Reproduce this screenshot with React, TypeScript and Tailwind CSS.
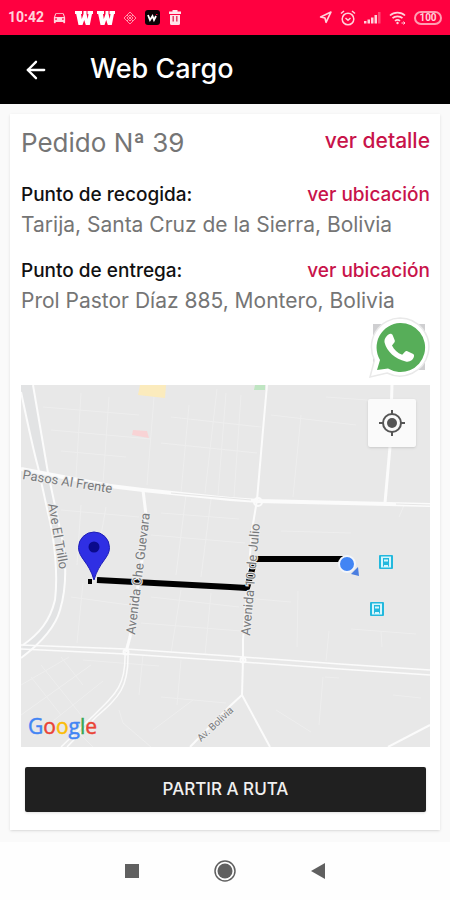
import { ArrowLeft, Navigation } from "lucide-react";
import { MdDirectionsCar } from "react-icons/md";

// =============================================================================
// DATA
// =============================================================================

interface Stop {
  id: string;
  label: string;
  address: string;
}

const STOPS: Stop[] = [
  {
    id: "pickup",
    label: "Punto de recogida:",
    address: "Tarija, Santa Cruz de la Sierra, Bolivia",
  },
  {
    id: "dropoff",
    label: "Punto de entrega:",
    address: "Prol Pastor Díaz 885, Montero, Bolivia",
  },
];

const MINOR_STREETS = [
  "M22 22 L118 30 M30 45 L130 54 M40 66 L105 72 M60 8 L55 92 M88 12 L82 98",
  "M133 12 L126 100 M168 20 L160 108 M196 4 L184 108 M150 32 L240 42 M140 58 L236 68",
  "M205 8 L197 110 M220 10 L213 112 M250 30 L335 40 M280 30 L272 112 M305 12 L360 16",
  "M60 120 L56 180 M85 122 L80 150 M40 125 L118 132 M50 212 L108 220 M62 198 L56 258",
  "M140 128 L218 134 M165 110 L155 190 M190 114 L180 192 M130 150 L224 158",
  "M130 212 L218 222 M160 205 L150 268 M190 208 L184 270 M120 238 L220 246",
  "M260 146 L330 148 M277 206 L276 262 M235 214 L270 217 M308 246 L305 276",
  "M330 244 L395 249 M360 246 L361 262 M384 118 L378 132 M304 292 L318 293 M302 292 L298 340",
  "M255 325 L290 347 M372 310 L400 313 M0 300 L48 272 M0 330 L70 280 M12 352 L82 296",
  "M20 280 L72 345 M40 272 L62 300 M98 325 L102 338 L130 362 M132 345 L172 315 M160 275 L156 320",
  "M62 275 L138 281 M122 270 L118 310 M140 312 L205 318 M50 340 L72 362 M10 292 L40 330",
];

// =============================================================================
// STATUS BAR
// =============================================================================

function HeavyW() {
  return (
    <svg width="18" height="16" viewBox="0 0 18 16" aria-hidden="true">
      <path
        d="M0 1h7v3H6l.8 5L8.500 4V1h3v3l1.200 5L13.500 4h-1V1H18v3h-1l-2.200 11h-4L9.200 10 7.500 15h-4L1.200 4H0z"
        fill="#fff"
      />
    </svg>
  );
}

function StatusBar() {
  return (
    <div className="flex h-[35px] items-center justify-between bg-[#ff0040] px-2 text-[#ffd3dc]">
      <div className="flex items-center gap-2">
        <span className="font-[Roboto] text-[14px] font-bold">10:42</span>
        <MdDirectionsCar size={15} aria-hidden="true" />
        <span className="flex gap-1">
          <HeavyW />
          <HeavyW />
        </span>
        <svg width="14" height="14" viewBox="0 0 14 14" fill="none" stroke="#ff91a8" aria-hidden="true">
          <path d="M7 1 13 7 7 13 1 7Z M7 4 10 7 7 10 4 7Z M4 4 10 10 M10 4 4 10" />
        </svg>
        <svg width="15" height="15" viewBox="0 0 15 15" aria-hidden="true">
          <rect width="15" height="15" rx="3" fill="#0b0306" />
          <path d="M3 5 5 10 7.500 6 9 10 11 6" fill="none" stroke="#fff" strokeWidth="1.800" />
          <path d="M11 4.500h1.500" stroke="#ff0040" />
        </svg>
        <svg width="14" height="15" viewBox="0 0 14 15" aria-hidden="true">
          <path d="M4.500 0h5v1.500H13V4H1V1.500h3.500zM2 5h10v8.500a1.500 1.500 0 0 1-1.500 1.500h-7A1.500 1.500 0 0 1 2 13.500z" fill="#ffe3e9" />
          <path d="M5.200 6v5.500M8.800 6v5.500" stroke="#e0305a" strokeWidth="1.400" />
        </svg>
      </div>
      <div className="flex items-center gap-2">
        <Navigation size={13} strokeWidth={3} aria-hidden="true" />
        <svg width="16" height="16" viewBox="0 0 16 16" fill="none" stroke="currentColor" strokeWidth="1.500" aria-hidden="true">
          <circle cx="8" cy="9" r="5.800" />
          <path d="M1 3.500 4 1M15 3.500 12 1M5.500 8 8 10.200 10.500 8" />
        </svg>
        <svg width="17" height="13" viewBox="0 0 17 13" fill="currentColor" aria-hidden="true">
          <path d="M0 10h2.500v2.500H0zM3.500 8.500H6v4H3.500zM7 6.500h2.500v6H7zM10.500 4H13v8.500h-2.500z" />
          <path d="M14 1h2.500v11.500H14z" opacity="0.35" />
        </svg>
        <svg width="17" height="14" viewBox="0 0 17 14" fill="none" stroke="currentColor" strokeWidth="1.700" aria-hidden="true">
          <path d="M1 4.500C5 .7 12 .7 16 4.500M3.500 7.200C6 4.800 11 4.800 13.500 7.200M6 10c1.500-1.400 3.500-1.400 5 0" />
          <circle cx="8.500" cy="12" r="1.200" fill="currentColor" stroke="none" />
          <path d="M12.500 12h3M14.500 10.500 16 12 14.500 13.500" strokeWidth="1" />
        </svg>
        <span className="flex h-3.5 w-7 items-center justify-center rounded-full border-2 border-[#ff9db1] font-[Roboto] text-[10px] leading-none font-bold">
          100
        </span>
      </div>
    </div>
  );
}

// =============================================================================
// ICONS
// =============================================================================

function WhatsAppIcon() {
  return (
    <svg width="62" height="63" viewBox="0 0 62 63" aria-hidden="true">
      <path d="M5 7h52v46H5z" fill="#cfcfd1" />
      <path
        d="M32 1a29 29 0 1 1-13 55L2 60 6.500 43A29 29 0 0 1 32 1z"
        fill="#fff"
        stroke="#e9e9e9"
        strokeWidth="1.500"
      />
      <path d="M32 6a24.500 24.500 0 1 1-12 45.500L9 53l3-10A24.500 24.500 0 0 1 32 6z" fill="#57ae59" />
      <path
        d="M20.500 17.500c1.500-1.200 3.500-1 4.200.8l2 5c.4 1-.1 2-.8 2.800l-1.900 2.400c2 4.200 5.500 7.500 10.200 9.300l2.800-3c.7-.8 1.500-.9 2.400-.5l5.300 2.500c1.200.6 1.500 1.300 1.300 2.500-.7 4.200-4.700 6-8.300 5.200-10.500-2.300-19-10.500-21-18.500-.8-3.500 1-6.500 3.800-8.500z"
        fill="#fff"
      />
    </svg>
  );
}

function BusStop({ x, y }: { x: number; y: number }) {
  return (
    <g transform={`translate(${x} ${y})`}>
      <rect width="14" height="14" rx="1" fill="#22b8dd" />
      <path d="M2 1.500h10v11H2z" fill="#d6f6fd" />
      <path d="M4 3h6v7H4z" fill="#22b8dd" />
      <path d="M5 4.500h4v2H5z" fill="#d6f6fd" />
      <path d="M4.500 10v1.500M9.500 10v1.500" stroke="#22b8dd" />
    </g>
  );
}

// =============================================================================
// MAP
// =============================================================================

function RouteMap() {
  return (
    <div className="relative">
      <svg
        viewBox="0 0 409 362"
        className="block h-auto w-full bg-[#e8e8e8] font-[Roboto]"
        role="img"
        aria-label="Mapa de la ruta"
      >
        {/* Landmarks */}
        <path d="M119 0h26l-1 13-27-3z" fill="#fbebbd" />
        <path d="M112 45l14 1 2 7-17-3z" fill="#f8d3d5" />
        <path d="M234 0h10v5h-11z" fill="#bfe5c2" />

        {/* Streets */}
        <g fill="none" stroke="#eeeeee">
          {MINOR_STREETS.map((d) => (
            <path key={d} d={d} />
          ))}
        </g>
        <path
          d="M0 7C6 35 11 60 17 82L27 128C34 155 37 190 34 215C29 236 18 249 2 260L0 273C20 258 34 243 39 225C45 205 46 185 42 158L27 88L12 0H0z"
          fill="#e2e3e4"
        />
        <g fill="none" stroke="#fbfbfb" strokeWidth="2">
          <path d="M0 7C6 35 11 60 17 82L27 128C34 155 37 190 34 215C29 236 18 249 2 260" />
          <path d="M12 0 27 88 42 158C46 185 45 205 39 225C34 243 20 258 0 273" />
          <path d="M0 260 105 264 209 271 319 279 409 285M0 264 105 269 209 276 319 284 409 290" strokeWidth="1.500" />
          <path d="M125 128 121 175 109 252 105 267" strokeWidth="3" />
          <path d="M104 267C105 300 96 308 71 332L40 362M107 267C108 303 98 312 75 332L46 362" strokeWidth="1.500" />
          <path d="M246 0 242 45 236 115 231 145 222 255V275L221 310 249 362M221 310 209 321 169 362" />
          <path d="M371 0 369 62 364 118" strokeWidth="3" />
          <path d="M409 340 367 362" />
          <path d="M122 105 125 130" strokeWidth="3" />
          <path d="M0 84 89 101 122 105 209 114 237 116 325 118 409 120" strokeWidth="4" />
          <path d="M150 108 230 115M375 119 409 120" stroke="#e6e6e6" strokeWidth="1" />
          <circle cx="237" cy="117" r="4" />
          <circle cx="222" cy="275" r="2.500" />
          <circle cx="105" cy="267" r="2.500" />
        </g>

        {/* Route */}
        <path d="M67 194h4v5h-4z" />
        <path d="M76 195 209 202 226 203 234 174H325" fill="none" stroke="#000" strokeWidth="6" strokeLinejoin="round" />

        {/* Street names */}
        <g fill="#77797b" stroke="#ededed" strokeWidth="2" paintOrder="stroke" fontSize="13">
          <text transform="translate(1 94) rotate(9)">Pasos Al Frente</text>
          <text transform="translate(27 119) rotate(80)">Ave El Trillo</text>
          <text transform="translate(114 250) rotate(-83)">Avenida Che Guevara</text>
          <text transform="translate(229 251) rotate(-85)">Avenida 10 de Julio</text>
          <text transform="translate(180 357) rotate(-43)" fontSize="10">Av. Bolivia</text>
        </g>

        <BusStop x={358} y={170} />
        <BusStop x={349} y={217} />

        {/* Current position */}
        <circle cx="326" cy="179" r="8" fill="#4285f4" stroke="#f3f6fb" strokeWidth="2" />
        <path d="M330 189 337 182 338 191z" fill="#4b7ee0" />

        {/* Destination pin */}
        <path
          d="M73 147a15.500 15.500 0 0 1 15.500 15.500C88.500 173 78 177 73 195 68 177 57.500 173 57.500 162.500A15.500 15.500 0 0 1 73 147z"
          fill="#2f2fe4"
          stroke="#1f1fb8"
        />
        <circle cx="73" cy="162" r="5.500" fill="#0a0a8c" />

        {/* Attribution */}
        <text x="7" y="349" fontSize="21" className="font-['Open_Sans',sans-serif]" strokeWidth="0.500">
          <tspan fill="#4285f4" stroke="#4285f4">G</tspan>
          <tspan fill="#ea4335" stroke="#ea4335">o</tspan>
          <tspan fill="#fbbc05" stroke="#fbbc05">o</tspan>
          <tspan fill="#4285f4" stroke="#4285f4">g</tspan>
          <tspan fill="#34a853" stroke="#34a853">l</tspan>
          <tspan fill="#ea4335" stroke="#ea4335">e</tspan>
        </text>
      </svg>
      <button
        type="button"
        aria-label="Mi ubicación"
        className="absolute top-3.5 right-3.5 flex size-12 items-center justify-center rounded-xs bg-[#fafafa] shadow"
      >
        <svg width="26" height="26" viewBox="0 0 26 26" fill="none" stroke="#555" strokeWidth="2" aria-hidden="true">
          <circle cx="13" cy="13" r="9" />
          <circle cx="13" cy="13" r="5" fill="#555" stroke="none" />
          <path d="M13 0v4M13 22v4M0 13h4M22 13h4" />
        </svg>
      </button>
    </div>
  );
}

// =============================================================================
// SCREEN
// =============================================================================

function StopRow({ stop }: { stop: Stop }) {
  return (
    <div className="mb-5">
      <div className="flex items-center justify-between text-[19px] leading-6 font-medium">
        <h3 className="text-[#111]">{stop.label}</h3>
        <a href={`#${stop.id}`} className="text-[#c8134a]">
          ver ubicación
        </a>
      </div>
      <p className="mt-1 text-[21px] leading-7 whitespace-nowrap text-[#757575]">{stop.address}</p>
    </div>
  );
}

export default function App() {
  return (
    <div className="flex min-h-screen flex-col bg-[#fafafa] font-[Inter,sans-serif]">
      <StatusBar />
      <header className="flex h-[69px] items-center gap-10 bg-black px-[22px] text-white">
        <button type="button" aria-label="Volver">
          <ArrowLeft size={28} strokeWidth={2} />
        </button>
        <h1 className="text-[27px] font-medium">Web Cargo</h1>
      </header>

      <main className="flex-1 px-2.5 pt-2.5 pb-3">
        <section className="bg-white pt-[13px] pr-2.5 pb-4.5 pl-[11px] shadow">
          <div className="mb-6 flex items-start justify-between">
            <h2 className="text-[26px] leading-8 text-[#757575]">Pedido Nª 39</h2>
            <a href="#detalle" className="text-[21px] leading-7 font-medium text-[#c8134a]">
              ver detalle
            </a>
          </div>
          {STOPS.map((stop) => (
            <StopRow key={stop.id} stop={stop} />
          ))}
          <div className="-mt-[18px] mb-[5px] flex justify-end">
            <button type="button" aria-label="Contactar por WhatsApp">
              <WhatsAppIcon />
            </button>
          </div>
          <RouteMap />
          <div className="mt-5 px-1">
            <button
              type="button"
              className="h-[45px] w-full rounded-xs bg-[#202020] text-[17px] font-medium text-[#f0f0f0] shadow"
            >
              PARTIR A RUTA
            </button>
          </div>
        </section>
      </main>

      <nav className="flex h-[58px] items-center justify-center gap-[73px] bg-[#fefefe]">
        <button type="button" aria-label="Recientes">
          <svg width="16" height="16" viewBox="0 0 16 16" aria-hidden="true">
            <path d="M1 1h14v14H1z" fill="#606060" />
          </svg>
        </button>
        <button type="button" aria-label="Inicio">
          <svg width="24" height="24" viewBox="0 0 24 24" aria-hidden="true">
            <circle cx="12" cy="12" r="10" fill="none" stroke="#606060" strokeWidth="1.500" />
            <circle cx="12" cy="12" r="7.500" fill="#606060" />
          </svg>
        </button>
        <button type="button" aria-label="Atrás">
          <svg width="16" height="16" viewBox="0 0 16 16" aria-hidden="true">
            <path d="M15 0v16L1 8z" fill="#606060" />
          </svg>
        </button>
      </nav>
    </div>
  );
}
